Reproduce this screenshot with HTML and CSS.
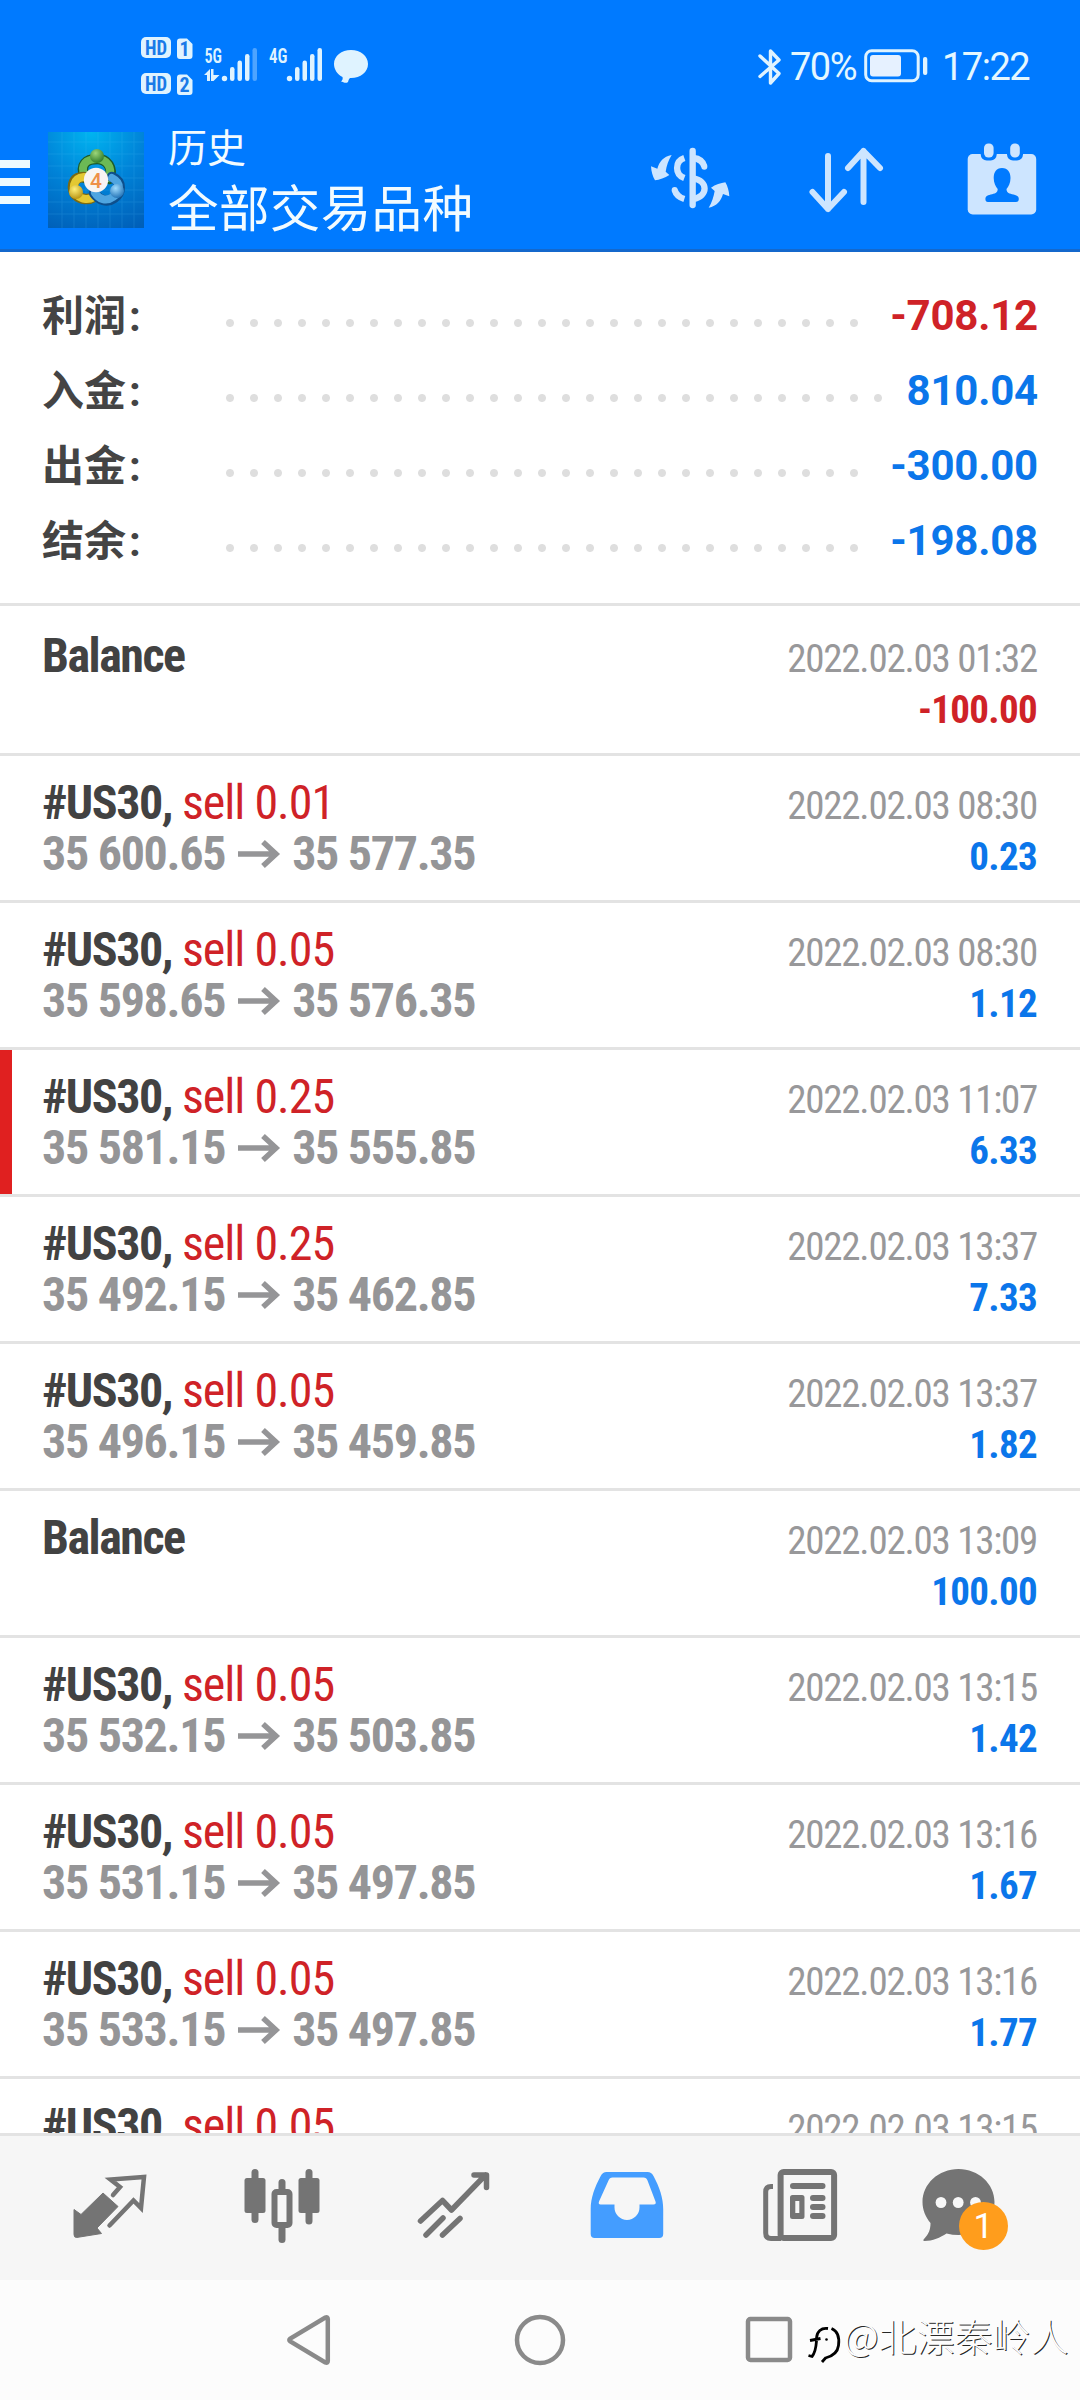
FILE: index.html
```html
<!DOCTYPE html>
<html lang="zh-CN">
<head>
<meta charset="utf-8">
<title>历史</title>
<link rel="stylesheet" href="styles.css">
</head>
<body>
<div class="screen">
  <div class="statusbar">
    <svg class="status-left" viewBox="0 0 232 60" width="232" height="60">
      <g fill="#dff3ff">
        <rect x="0" y="0" width="30" height="21" rx="5"/>
        <rect x="0" y="36" width="30" height="21" rx="5"/>
        <path d="M39 1.500h7l5.500 5.500v12a3 3 0 0 1-3 3h-9.500a3 3 0 0 1-3-3v-14.500a3 3 0 0 1 3-3z"/>
        <path d="M39 37.500h7l5.500 5.500v12a3 3 0 0 1-3 3h-9.500a3 3 0 0 1-3-3v-14.500a3 3 0 0 1 3-3z"/>
        <path d="M63 38l6-6v12h-3v-6zM70 32h2.500v6h6l-6 6h-2.500z"/>
        <circle cx="83.500" cy="41.500" r="2.700"/>
        <rect x="89" y="30" width="4.500" height="14" rx="2.200"/>
        <rect x="96.500" y="23.500" width="4.500" height="20.500" rx="2.200"/>
        <rect x="104" y="17" width="4.500" height="27" rx="2.200"/>
        <rect x="111.500" y="11" width="4.500" height="33" rx="2.200" opacity=".35"/>
        <circle cx="148.500" cy="41.500" r="2.700"/>
        <rect x="154" y="30" width="4.500" height="14" rx="2.200"/>
        <rect x="161.500" y="23.500" width="4.500" height="20.500" rx="2.200"/>
        <rect x="169" y="17" width="4.500" height="27" rx="2.200"/>
        <rect x="176.500" y="11" width="4.500" height="33" rx="2.200"/>
        <path d="M210 13c9.500 0 17 6 17 14s-7.500 14-17 14c-1 0-2 0-3 4-2 2-5 0-7-.5 1.500-1 2-3 1.500-4.500-5-2.500-8.500-7.500-8.500-13 0-8 7.500-14 17-14z"/>
      </g>
      <g class="status-tags">
        <text class="tag-dark" x="4" y="17.500" textLength="22" lengthAdjust="spacingAndGlyphs">HD</text>
        <text class="tag-dark" x="4" y="53.500" textLength="22" lengthAdjust="spacingAndGlyphs">HD</text>
        <text class="tag-dark" x="43.500" y="19" text-anchor="middle">1</text>
        <text class="tag-dark" x="43.500" y="55" text-anchor="middle">2</text>
        <text class="tag-net" x="63.500" y="26" textLength="17.500" lengthAdjust="spacingAndGlyphs">5G</text>
        <text class="tag-net" x="128" y="26" textLength="18.500" lengthAdjust="spacingAndGlyphs">4G</text>
      </g>
    </svg>
    <div class="status-right">
      <svg viewBox="0 0 24 38" width="24" height="38"><path d="M2 8l19 17.500-8.500 9.500v-32l8.500 9-19 16.500" fill="none" stroke="#dff3ff" stroke-width="3.400" stroke-linejoin="round" stroke-linecap="round"/></svg>
      <span class="percent">70%</span>
      <svg class="battery" viewBox="0 0 64 34" width="64" height="34"><rect x="1.700" y="1.700" width="52.500" height="30" rx="6" fill="none" stroke="#dff3ff" stroke-width="3"/><rect x="6" y="6" width="31" height="21.500" rx="3" fill="#e6f1ff"/><rect x="59" y="8" width="4.300" height="18" rx="2" fill="#dff3ff"/></svg>
      <span class="clock">17:22</span>
    </div>
  </div>

  <header class="appbar">
    <svg class="menu" viewBox="0 0 30 44" width="30" height="44"><path d="M0 0h30v8h-30zM0 18h30v8h-30zM0 36h30v8h-30z" fill="#eefaff"/></svg>
    <svg class="logo" viewBox="0 0 96 96" width="96" height="96">
      <defs>
        <radialGradient id="bg" cx=".45" cy="0" r="1.100"><stop offset="0" stop-color="#00b4f0"/><stop offset=".5" stop-color="#0083d8"/><stop offset="1" stop-color="#005fb8"/></radialGradient>
        <radialGradient id="gr" cx=".4" cy=".3" r=".8"><stop offset="0" stop-color="#9cd67a"/><stop offset="1" stop-color="#22701f"/></radialGradient>
        <radialGradient id="ye" cx=".4" cy=".3" r=".8"><stop offset="0" stop-color="#fff07a"/><stop offset="1" stop-color="#b08a08"/></radialGradient>
        <radialGradient id="bl" cx=".4" cy=".3" r=".8"><stop offset="0" stop-color="#a0dcff"/><stop offset="1" stop-color="#1467ae"/></radialGradient>
      </defs>
      <rect width="96" height="96" fill="url(#bg)"/>
      <path d="M0 10h96M0 22h96M0 34h96M0 46h96M0 58h96M0 70h96M0 82h96M14 0v96M26 0v96M38 0v96M50 0v96M62 0v96M74 0v96M86 0v96" stroke="#5cc8ff" stroke-width="1" opacity=".16"/>
      <g fill="none" stroke-linecap="round">
        <path d="M37 46C31 32 39 27 49 27s17 9 12 20" stroke="#1d5b2a" stroke-width="10.500"/>
        <path d="M37 45C31 32 39 27 49 27s16 9 12 19" stroke="#6cba55" stroke-width="8"/>
        <path d="M36 45C23 45 23 58 28 63s13 5 18 2" stroke="#7b6a12" stroke-width="10.500"/>
        <path d="M36 45C24 46 24 58 29 63s12 5 17 2" stroke="#e3c832" stroke-width="8"/>
        <path d="M64 45C75 50 73 61 66 66s-15 2-20-5" stroke="#0e4f8c" stroke-width="10.500"/>
        <path d="M64 46C74 51 72 60 65 65s-14 2-18-4" stroke="#4fa5e0" stroke-width="8"/>
      </g>
      <circle cx="49" cy="24" r="7" fill="url(#gr)"/>
      <circle cx="28" cy="60" r="7" fill="url(#ye)"/>
      <circle cx="69" cy="59" r="7" fill="url(#bl)"/>
      <circle cx="48" cy="48" r="12.200" fill="#f7f4f3"/>
      <text class="logo-num" x="48" y="55.500" text-anchor="middle">4</text>
    </svg>
    <div class="titles">
      <div class="title-small">历史</div>
      <div class="title-main">全部交易品种</div>
    </div>
    <div class="actions">
      <svg viewBox="0 0 360 300" width="120" height="100">
        <g fill="none" stroke="#cde5ff" stroke-width="19">
          <path d="M158 63v162" stroke-linecap="round"/>
          <path d="M133 84C104 94 104 133 133 144"/>
          <path d="M104 180C108 195 117 202 133 207"/>
          <path d="M160 84C178 86 189 95 193 109"/>
          <path d="M160 145C205 152 205 199 160 207"/>
        </g>
        <circle cx="193" cy="110" r="9" fill="#cde5ff"/><circle cx="104" cy="180" r="9" fill="#cde5ff"/>
        <path id="swap" d="M95 75C70 80 58 95 52 116L33 109C34 125 38 140 45 151C58 149 75 144 88 135L77 125C80 108 85 90 95 75Z" fill="#cde5ff"/>
        <use href="#swap" transform="rotate(180 150.500 154)"/>
      </svg>
      <svg viewBox="800 130 100 100" width="100" height="100"><path d="M828 156v53M812.500 192l15.500 17 16-17M863.500 202v-51M848 168l15.500-17 16.500 17" fill="none" stroke="#cde5ff" stroke-width="6" stroke-linecap="round" stroke-linejoin="round"/></svg>
      <svg viewBox="952 130 100 100" width="100" height="100">
        <rect x="967.700" y="154" width="68.500" height="60.500" rx="5" fill="#cde5ff"/>
        <rect x="980.700" y="140" width="16" height="20.500" rx="6" fill="#007aff"/><rect x="1007" y="140" width="16" height="20.500" rx="6" fill="#007aff"/>
        <rect x="984" y="143.500" width="9.600" height="14" rx="4.500" fill="#cde5ff"/><rect x="1010.200" y="143.500" width="9.600" height="14" rx="4.500" fill="#cde5ff"/>
        <path d="M1002 168c6 0 8.500 4.500 8.500 10 0 5-2 8.500-4 11 0 4 3 4.500 7 5.500s5.300 2 5.300 4.500c0 2-1 3-2.800 3h-28c-1.800 0-2.600-1-2.600-3 0-2.500 1.300-3.500 5.300-4.500s7-1.500 7-5.500c-2-2.500-4-6-4-11 0-5.500 2.300-10 8.300-10z" fill="#007aff"/>
      </svg>
    </div>
  </header>

  <section class="summary">
    <div class="sum-row"><span class="sum-label">利润<span class="colon">:</span></span><span class="dots"></span><span class="sum-value red">-708.12</span></div>
    <div class="sum-row"><span class="sum-label">入金<span class="colon">:</span></span><span class="dots"></span><span class="sum-value blue">810.04</span></div>
    <div class="sum-row"><span class="sum-label">出金<span class="colon">:</span></span><span class="dots"></span><span class="sum-value blue">-300.00</span></div>
    <div class="sum-row"><span class="sum-label">结余<span class="colon">:</span></span><span class="dots"></span><span class="sum-value blue">-198.08</span></div>
  </section>

  <main class="deals" id="deals"></main>

  <nav class="tabs">
    <svg viewBox="65 2163 90 90"><path d="M113 2195l7-8-9.500-7.500 33.500-2.500-3 31-7.500-7.500-24 25" fill="none" stroke="#747474" stroke-width="4.500" stroke-linejoin="miter" stroke-linecap="round"/><path d="M103 2193l15 13.500-21 21.500 4.500 5.500-25 4q-2.500 0-2.500-3v-25l7 5z" fill="#747474" stroke="#747474" stroke-width="1" stroke-linejoin="round"/></svg>
    <svg viewBox="237.500 2163 90 90" fill="#747474"><rect x="244" y="2178" width="21" height="35" rx="2.500"/><rect x="251" y="2169" width="7" height="54" rx="3.500"/><rect x="298" y="2178" width="21" height="35" rx="2.500"/><rect x="305" y="2169" width="7" height="55.500" rx="3.500"/><rect x="278" y="2179" width="7" height="14" rx="3.500"/><rect x="278" y="2224" width="7" height="19" rx="3.500"/><rect x="274" y="2192" width="15" height="33" rx="2" fill="none" stroke="#747474" stroke-width="6"/></svg>
    <svg viewBox="410 2163 90 90"><path d="M420.500 2221l22-20.500 9 9.500 34-35M474 2175h12.500v12.500M426 2235l17-17M442.500 2235l17.500-16.500" fill="none" stroke="#747474" stroke-width="5.500" stroke-linecap="round" stroke-linejoin="round"/></svg>
    <svg viewBox="582.500 2163 90 90"><path fill-rule="evenodd" fill="#449dff" d="M606 2172h41q4 0 6 4c6 11 9.700 22 9.700 33v25q0 4-4 4h-64.500q-4 0-4-4v-25c0-11 4-22 10-33q2-4 5.800-4zM612 2177.500q-3 0-4 3l-9.500 21q-1 3 1.500 3h14v3a12.500 12.500 0 0 0 25 0v-3h14q3 0 2-3l-8-21q-1-3-4-3z"/></svg>
    <svg viewBox="755 2163 90 90"><g fill="none" stroke="#747474" stroke-width="6"><rect x="780.600" y="2172" width="53.500" height="66" rx="3"/><path d="M773 2186.500h-2q-5.300 0-5.300 5.500v41q0 5.500 5.300 5.500h10" stroke-width="5"/></g><g fill="#747474"><rect x="790" y="2183" width="35.500" height="6" rx="3"/><rect x="810" y="2195" width="15.500" height="6" rx="3"/><rect x="810" y="2204" width="15.500" height="6" rx="3"/><rect x="810" y="2213" width="15.500" height="6" rx="3"/><path fill-rule="evenodd" d="M792.500 2195h9.500q2.500 0 2.500 2.500v19q0 2.500-2.500 2.500h-9.500q-2.500 0-2.500-2.500v-19q0-2.500 2.500-2.500zM795.300 2201v12h4v-12z"/></g></svg>
    <div class="chat"><svg viewBox="927.500 2163 90 90"><path fill="#747474" d="M958 2169c20 0 36 15 36 33s-16 33-36 33q-6 0-12-1.500c-6 4-14 7.500-22 7.500-1.500 0-1.500-1-.5-2 5-5 6.500-10 6.500-16-5-6-8-13-8-21 0-18 16-33 36-33z"/><g fill="#f8f8f8"><ellipse cx="940.500" cy="2202.500" rx="5.400" ry="5.600"/><ellipse cx="957.700" cy="2202.500" rx="5.400" ry="5.600"/><ellipse cx="975" cy="2202.500" rx="5.400" ry="5.600"/></g></svg><span class="badge">1</span></div>
  </nav>

  <div class="sysnav">
    <svg viewBox="280 2310 60 60"><path d="M327.800 2319v42q0 2.500-2.500 1.500l-35-21q-2-1.500 0-3l35-21q2.500-1 2.500 1.500z"/></svg>
    <svg viewBox="510 2310 60 60"><circle cx="540" cy="2340" r="23"/></svg>
    <svg viewBox="740 2310 60 60"><rect x="748" y="2319" width="42" height="41" rx="2.500"/></svg>
  </div>

  <div class="watermark">
    <svg viewBox="0 0 44 68" width="44" height="68"><path d="M28 28.500c-7-1-11 3-11.500 9.500M10 40.500l10.500-2M16.500 41c-.5 7-1.500 12-4.500 15.500l-3.500-1M31.500 28.500c7 3 8 10 7 17-1 8-7 11-13 12.500l-3.500 4" fill="none" stroke="#000" stroke-width="2.800"/><circle cx="26.500" cy="39.500" r="1.300"/></svg>
    <span>@北漂秦岭人</span>
  </div>
</div>
<script src="deals.js"></script>
</body>
</html>
```
FILE: styles.css
```css
* { box-sizing: border-box; margin: 0; padding: 0; }
body { width: 1080px; height: 2400px; overflow: hidden; background: #fff; font-family: Roboto, "Noto Sans CJK SC", sans-serif; }
.screen { position: relative; display: flex; flex-direction: column; width: 1080px; height: 2400px; }
svg { display: block; flex: none; overflow: visible; }

.statusbar { display: flex; justify-content: space-between; height: 112px; padding: 37px 50px 0 141px; background: #007aff; color: #e4f7ff; }
.status-tags text { font-family: "Roboto Condensed", sans-serif; font-weight: 700; font-size: 20px; }
.status-tags .tag-dark { fill: #1a7ae8; }
.status-tags .tag-net { fill: #dff3ff; font-size: 21px; font-weight: 600; }
.status-right { display: flex; align-items: center; height: 60px; font-size: 38px; line-height: 60px; }
.percent { width: 67px; margin-left: 8px; letter-spacing: -1.5px; }
.battery { margin: -3px 0 0 7px; }
.clock { width: 88px; margin-left: 14px; letter-spacing: -1.5px; }

.appbar { display: flex; height: 140px; padding-top: 10px; background: #007aff; border-bottom: 3px solid #1468cc; color: #f2fbff; }
.menu { margin-top: 38px; }
.logo { margin: 10px 0 0 18px; }
.logo-num { font: 500 21px Roboto, sans-serif; fill: #ee9048; }
.titles { margin-left: 24px; padding-top: 2px; }
.title-small { font-size: 39px; line-height: 50px; height: 53px; }
.title-main { font-size: 50.5px; line-height: 66px; letter-spacing: 0.4px; }
.actions { display: flex; gap: 40px; margin-left: auto; padding: 8px 28px 0 0; }
.actions svg + svg + svg { margin-left: 12px; }

.summary { height: 354px; padding: 26px 42px 0 42px; border-bottom: 3px solid #e3e3e3; }
.sum-row { display: flex; height: 75px; font-size: 42px; line-height: 75px; font-weight: 700; }
.sum-label { width: 176px; color: #444; padding-top: 1px; }
.sum-value { letter-spacing: -0.2px; }
.colon { margin-left: 3px; }
.dots { flex: 1; height: 24px; margin: 33px 20px 0 0; background: radial-gradient(circle at center, #dedede 3.5px, rgba(222,222,222,0) 4.5px) 0 0 / 24px 24px repeat-x; }
.red { color: #cf2227; }
.blue { color: #0b76ea; }

.deals { height: 1530px; padding-top: 3px; overflow: hidden; border-bottom: 3px solid #e3e3e3; font-family: "Roboto Condensed", sans-serif; }
.deal { display: flex; justify-content: space-between; height: 147px; padding: 21px 43px 0 42px; border-bottom: 3px solid #e3e3e3; }
.deal.marked { background: linear-gradient(#e02020, #e02020) 0 0 / 12px 100% no-repeat padding-box; }
.name { font-size: 48px; line-height: 51px; font-weight: 700; color: #424242; letter-spacing: -1.5px; white-space: pre; }
.side { margin-left: 0.5px; font-weight: 400; letter-spacing: -1px; }
.price { display: flex; align-items: center; font-size: 48px; line-height: 51px; font-weight: 700; color: #959597; letter-spacing: -1.3px; }
.price svg { margin: 0 12px 0 13px; }
.meta { padding-top: 4px; text-align: right; font-size: 39px; line-height: 51px; }
.date { color: #98989a; letter-spacing: -1.25px; }
.amount { font-weight: 700; letter-spacing: -0.7px; }

.tabs { display: grid; grid-template-columns: repeat(6, 172.5px); height: 144px; padding-left: 24px; align-items: center; justify-items: center; background: #f6f6f6; }
.tabs svg { width: 90px; height: 90px; }
.chat { position: relative; }
.badge { position: absolute; left: 31px; top: 39px; width: 49px; height: 48px; border-radius: 50%; background: #ff9d1c; color: #fff; font-size: 35px; line-height: 49px; text-align: center; }

.sysnav { display: grid; grid-template-columns: repeat(3, 230px); justify-content: center; justify-items: center; align-items: center; height: 120px; background: #fcfcfc; }
.sysnav svg { width: 60px; height: 60px; fill: none; stroke: #8a8a8a; stroke-width: 4.5px; }

.watermark { position: absolute; left: 800px; top: 2300px; display: flex; height: 68px; font: 300 38px/70px "Noto Sans CJK SC", sans-serif; color: #fdfdfd; text-shadow: 1px 1px 0.5px rgba(0,0,0,.85); white-space: nowrap; }
```
FILE: deals.js
```js
const deals = [
  ["Balance", "", "", "", "2022.02.03 01:32", "-100.00"],
  ["#US30,", "sell 0.01", "35 600.65", "35 577.35", "2022.02.03 08:30", "0.23"],
  ["#US30,", "sell 0.05", "35 598.65", "35 576.35", "2022.02.03 08:30", "1.12"],
  ["#US30,", "sell 0.25", "35 581.15", "35 555.85", "2022.02.03 11:07", "6.33", true],
  ["#US30,", "sell 0.25", "35 492.15", "35 462.85", "2022.02.03 13:37", "7.33"],
  ["#US30,", "sell 0.05", "35 496.15", "35 459.85", "2022.02.03 13:37", "1.82"],
  ["Balance", "", "", "", "2022.02.03 13:09", "100.00"],
  ["#US30,", "sell 0.05", "35 532.15", "35 503.85", "2022.02.03 13:15", "1.42"],
  ["#US30,", "sell 0.05", "35 531.15", "35 497.85", "2022.02.03 13:16", "1.67"],
  ["#US30,", "sell 0.05", "35 533.15", "35 497.85", "2022.02.03 13:16", "1.77"],
  ["#US30,", "sell 0.05", "", "", "2022.02.03 13:15", ""]
];
const arrow = '<svg viewBox="0 0 42 28" width="42" height="28"><path d="M0 14h38M25 2l13 12-13 12" fill="none" stroke="#959597" stroke-width="5.5"/></svg>';
document.getElementById("deals").innerHTML = deals.map(([name, side, from, to, date, amount, marked]) => `
  <div class="deal${marked ? " marked" : ""}">
    <div>
      <div class="name">${name}${side ? ` <span class="side red">${side}</span>` : ""}</div>
      ${from ? `<div class="price"><span>${from}</span>${arrow}<span>${to}</span></div>` : ""}
    </div>
    <div class="meta">
      <div class="date">${date}</div>
      <div class="amount ${amount.startsWith("-") ? "red" : "blue"}">${amount}</div>
    </div>
  </div>`).join("");
```
